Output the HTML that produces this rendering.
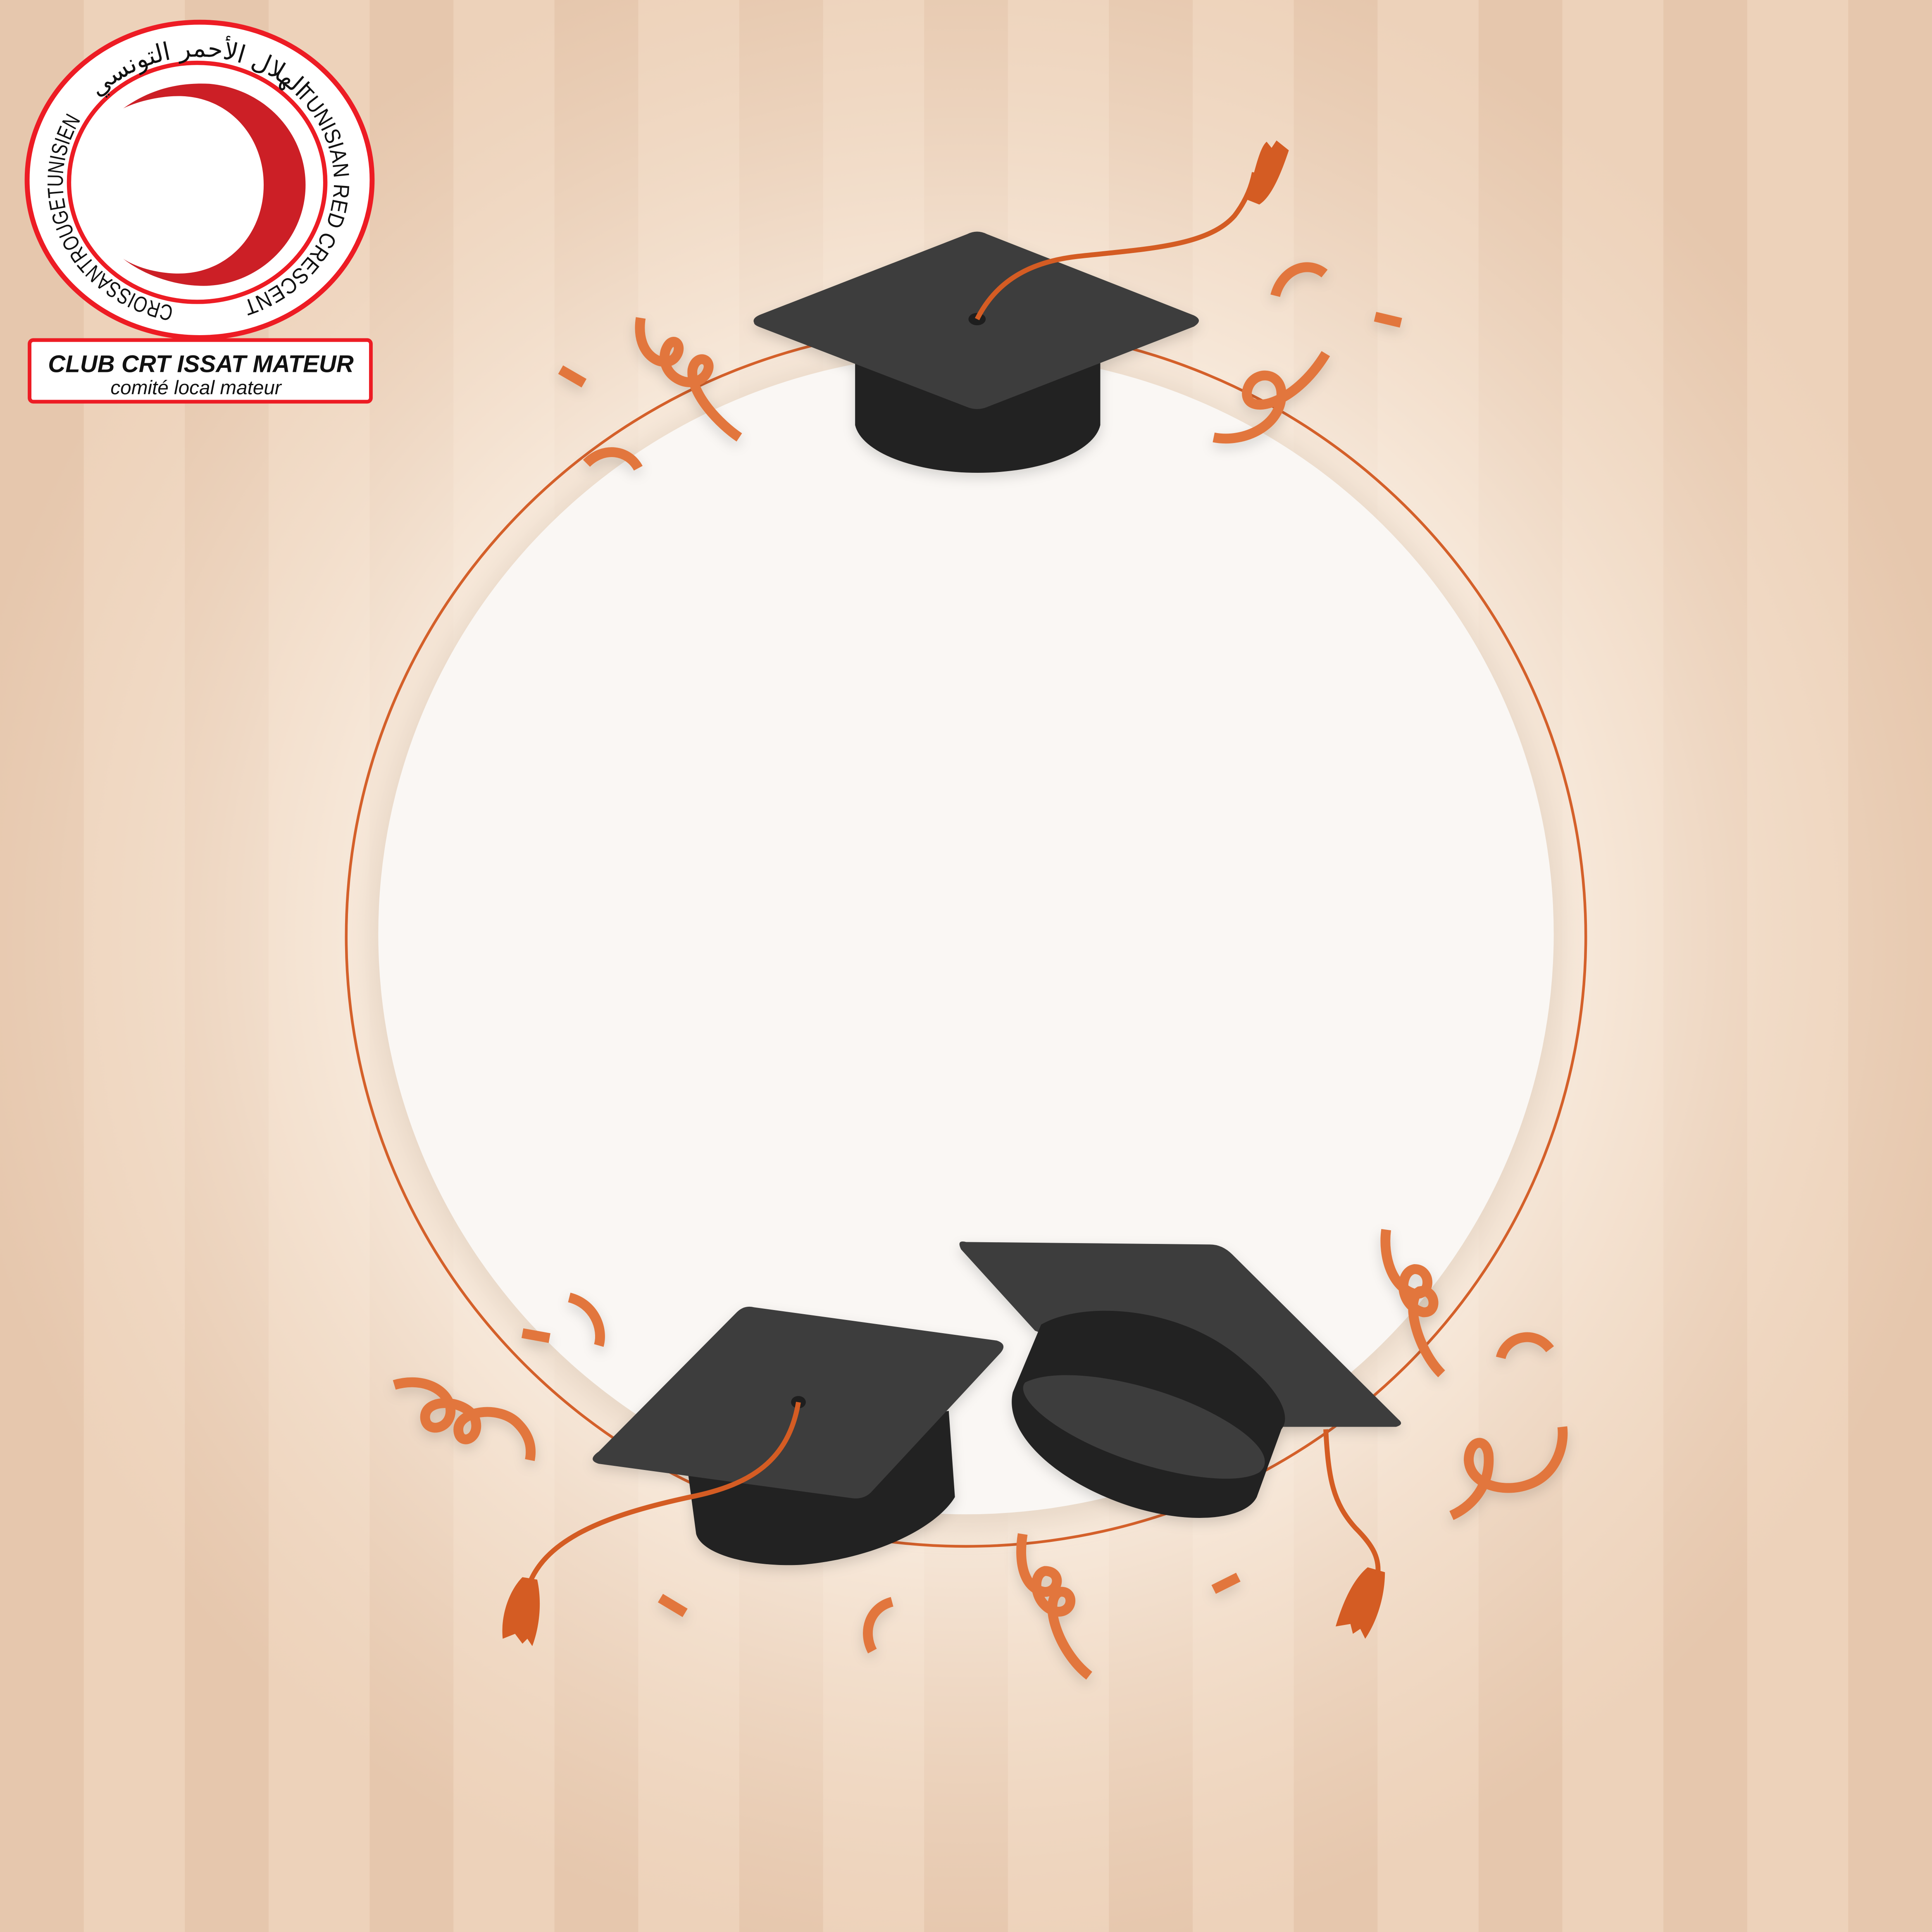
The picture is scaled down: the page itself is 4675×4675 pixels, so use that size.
<!DOCTYPE html>
<html><head><meta charset="utf-8"><style>
html,body{margin:0;padding:0;width:4675px;height:4675px;overflow:hidden;background:#e8cbb2}
svg{display:block}
</style></head><body>
<svg width="4675" height="4675" viewBox="0 0 1568 1568" xmlns="http://www.w3.org/2000/svg">
<defs>
<pattern id="st" width="150" height="1568" patternUnits="userSpaceOnUse">
<rect width="150" height="1568" fill="#edd2ba"/>
<rect width="68" height="1568" fill="#e6c7ad"/>
</pattern>
<radialGradient id="glow" cx="784" cy="760" r="830" gradientUnits="userSpaceOnUse">
<stop offset="0" stop-color="#fdf8f2" stop-opacity="1"/>
<stop offset="0.55" stop-color="#fbf1e6" stop-opacity="0.85"/>
<stop offset="0.8" stop-color="#f6e6d6" stop-opacity="0.4"/>
<stop offset="1" stop-color="#f3e0cd" stop-opacity="0"/>
</radialGradient>
<filter id="sh" x="-20%" y="-20%" width="140%" height="140%"><feGaussianBlur stdDeviation="10"/></filter>
<filter id="ds" x="-20%" y="-20%" width="140%" height="140%"><feDropShadow dx="0" dy="4" stdDeviation="5" flood-color="#000" flood-opacity="0.15"/></filter>
<path id="ringR" d="M161,46 a110,102 0 1,1 0,204 a110,102 0 1,1 0,-204"/>
<path id="ringT" d="M51,148 a110,102 0 0,1 220,0"/>
</defs>
<rect width="1568" height="1568" fill="url(#st)"/>
<rect width="1568" height="1568" fill="url(#glow)"/>

<ellipse cx="784" cy="762" rx="484" ry="478" fill="#d9c6b3" opacity="0.5" filter="url(#sh)"/>
<ellipse cx="784" cy="758" rx="477" ry="471" fill="#faf7f4"/>
<ellipse cx="784" cy="760" rx="503" ry="495" fill="none" stroke="#d4602a" stroke-width="2.2"/>

<g fill="none" stroke="#e2763c" stroke-width="8" stroke-linecap="butt" filter="url(#ds)">
<path d="M455,300 L474,311"/>
<path d="M520,258 C515,290 540,300 548,290 C556,280 545,270 540,285 C535,305 560,318 572,305 C582,292 565,285 562,300 C560,320 585,345 600,355"/>
<path d="M476,376 C490,362 510,365 518,380"/>
<path d="M1035,240 C1040,220 1060,210 1075,222"/>
<path d="M1116,257 L1137,262"/>
<path d="M985,355 C1010,360 1040,345 1040,320 C1040,300 1015,300 1012,318 C1010,338 1050,330 1076,287"/>
<path d="M424,1082 L446,1086"/>
<path d="M462,1053 C482,1058 490,1078 486,1092"/>
<path d="M320,1124 C340,1118 360,1125 365,1140 C370,1160 345,1165 345,1150 C345,1135 375,1135 385,1150 C392,1168 372,1175 372,1160 C372,1145 405,1140 420,1155 C430,1165 432,1175 430,1185"/>
<path d="M1125,998 C1122,1020 1130,1045 1148,1050 C1162,1052 1162,1030 1148,1030 C1135,1032 1135,1060 1155,1065 C1168,1066 1165,1045 1152,1048 C1140,1055 1150,1095 1170,1115"/>
<path d="M1218,1102 C1222,1085 1245,1078 1258,1095"/>
<path d="M1178,1230 C1200,1220 1210,1200 1208,1180 C1205,1165 1192,1170 1192,1185 C1193,1205 1220,1212 1240,1205 C1262,1198 1270,1175 1268,1158"/>
<path d="M536,1297 L556,1309"/>
<path d="M708,1340 C700,1325 705,1305 724,1300"/>
<path d="M830,1245 C826,1270 832,1290 848,1292 C860,1292 862,1275 848,1275 C836,1278 840,1305 858,1308 C872,1309 872,1290 860,1292 C846,1298 858,1340 884,1360"/>
<path d="M985,1290 L1005,1280"/>
</g>

<g filter="url(#ds)">
<path d="M694,285 L694,345 A100,43 0 0,0 893,345 L893,285 Z" fill="#212121"/>
<path d="M612,262 Q610,258 618,255 L785,190 Q793,186 801,190 L969,256 Q977,260 969,265 L802,330 Q793,334 784,330 L618,266 Q612,264 612,262 Z" fill="#3d3c3d"/>
</g>
<ellipse cx="793" cy="259" rx="7" ry="5" fill="#1e1e1e"/>
<path d="M793,259 C810,225 840,212 875,208 C930,202 980,200 1002,175 C1012,162 1016,150 1018,140" fill="none" stroke="#d45c23" stroke-width="4"/>
<path d="M1012,162 C1018,140 1022,120 1028,115 L1032,120 L1036,114 L1046,122 C1040,140 1032,160 1022,166 Z" fill="#d45c23"/>

<g filter="url(#ds)">
<path d="M557,1185 L565,1245 C570,1262 610,1272 650,1270 C710,1265 760,1240 775,1215 L770,1145 Z" fill="#212121"/>
<path d="M486,1178 L598,1065 Q604,1059 612,1061 L809,1088 Q818,1091 812,1098 L708,1210 Q702,1217 692,1216 L486,1188 Q476,1185 486,1178 Z" fill="#3d3c3d"/>
</g>
<ellipse cx="648" cy="1138" rx="6" ry="5" fill="#1e1e1e"/>
<path d="M648,1138 C640,1185 610,1205 560,1215 C490,1230 440,1250 428,1290" fill="none" stroke="#d45c23" stroke-width="4"/>
<path d="M424,1280 L436,1282 C440,1300 438,1320 432,1336 L428,1330 L424,1334 L418,1326 L408,1330 C406,1310 414,1290 424,1280 Z" fill="#d45c23"/>

<g filter="url(#ds)">
<path d="M784,1008 Q776,1006 780,1014 L840,1080 L1040,1158 L1133,1158 Q1140,1156 1135,1152 L1000,1018 Q992,1010 982,1010 Z" fill="#3d3c3d"/>
<path d="M845,1075 C880,1055 960,1060 1010,1105 C1040,1130 1048,1150 1040,1160 L1020,1215 C1010,1235 960,1238 910,1220 C850,1198 815,1160 822,1130 Z" fill="#212121"/>
<path d="M832,1122 C860,1108 930,1120 980,1145 C1020,1165 1035,1185 1022,1195 C1000,1208 930,1195 880,1170 C840,1150 825,1130 832,1122 Z" fill="#3d3c3d"/>
</g>
<path d="M1076,1160 C1078,1200 1082,1220 1100,1240 C1115,1255 1120,1265 1118,1280" fill="none" stroke="#d45c23" stroke-width="4"/>
<path d="M1110,1272 L1124,1276 C1124,1295 1118,1315 1108,1330 L1104,1322 L1098,1326 L1096,1318 L1084,1320 C1090,1300 1098,1282 1110,1272 Z" fill="#d45c23"/>

<ellipse cx="162" cy="146" rx="140" ry="128" fill="#fff" stroke="#ed1c24" stroke-width="4"/>
<ellipse cx="160" cy="148" rx="104" ry="97" fill="#fff" stroke="#ed1c24" stroke-width="3.5"/>
<path d="M100,88 C125,70 150,67 170,68 C215,72 248,108 248,150 C248,195 210,232 165,232 C140,232 115,222 100,210 C112,218 130,222 145,222 C185,222 214,190 214,150 C214,110 185,78 145,78 C130,78 112,82 100,88 Z" fill="#cc1f26"/>
<g font-family="Liberation Sans, DejaVu Sans, sans-serif" font-size="18" fill="#111">
<text><textPath href="#ringR" startOffset="13%" textLength="210" lengthAdjust="spacingAndGlyphs">TUNISIAN RED CRESCENT</textPath></text>
<text><textPath href="#ringR" startOffset="53%" textLength="200" lengthAdjust="spacingAndGlyphs">CROISSANTROUGETUNISIEN</textPath></text>
</g>
<text font-family="DejaVu Sans, sans-serif" font-size="20" fill="#111" text-anchor="middle"><textPath href="#ringT" startOffset="50%">الهلال الأحمر التونسي</textPath></text>

<rect x="24" y="276" width="277" height="50" rx="3" fill="#fff" stroke="#ed1c24" stroke-width="3"/>
<text x="163" y="302" text-anchor="middle" font-family="Liberation Sans, sans-serif" font-weight="bold" font-style="italic" font-size="19.5" fill="#111">CLUB CRT ISSAT MATEUR</text>
<text x="159" y="320" text-anchor="middle" font-family="Liberation Sans, sans-serif" font-style="italic" font-size="16" fill="#111">comité local mateur</text>
</svg>
</body></html>
